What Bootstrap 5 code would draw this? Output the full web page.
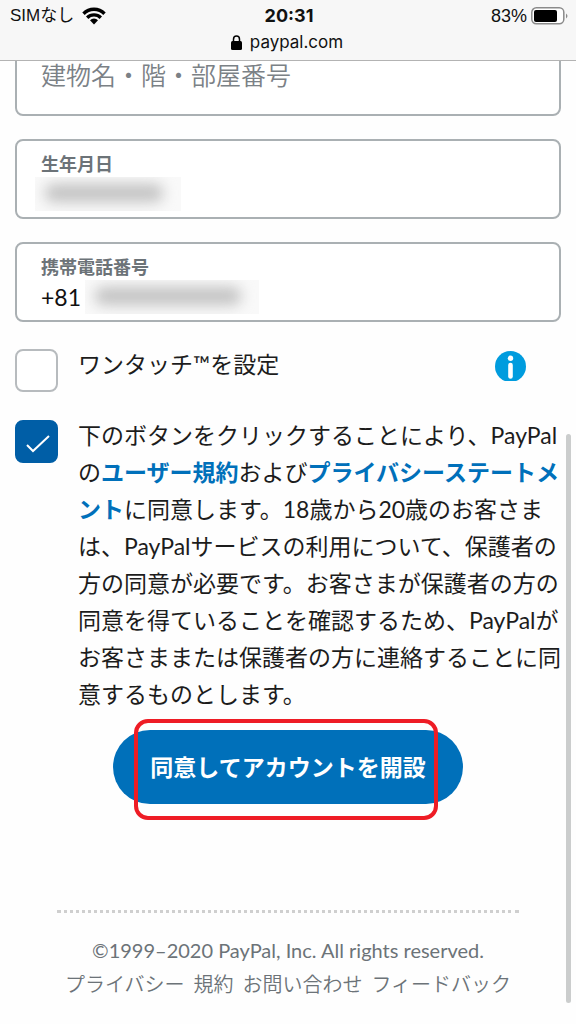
<!DOCTYPE html>
<html lang="ja">
<head>
<meta charset="utf-8">
<meta name="viewport" content="width=device-width, initial-scale=1">
<title>PayPal - アカウント開設</title>
<link href="https://cdn.jsdelivr.net/npm/bootstrap@5.3.0/dist/css/bootstrap.min.css" rel="stylesheet">
<style>
  body { font-family: Lato, "Noto Sans CJK JP", sans-serif; color: #1c1c1c; background: #fefefe; font-size: 23px; }
  .phone-bar { background: #f7f7f7; border-bottom: 1px solid #b3b3b3; font: 17px/26px Inter, "Noto Sans CJK JP", sans-serif; color: #111; padding: 3px 8px 5px 10px; }
  .phone-bar .sim { font-family: "Liberation Sans", "Noto Sans CJK JP", sans-serif; }
  .phone-bar .charge { font-size: 18px; }
  .phone-bar strong { font-size: 18px; }
  .phone-bar .side { flex: 1 1 0; }
  .signup { padding: 0 15px; margin-top: -25px; }
  .field { border: 2px solid #aab0b3; border-radius: 8px; height: 80px; margin-bottom: 23px; padding: 4px 24px 0; background: #fff; }
  .field label { color: #6c7378; font-size: 18px; line-height: 26px; font-weight: 700; }
  .field input { border: 0; padding: 0; background: none; outline: 0; width: 100%; }
  .field .address { font-size: 25px; color: #6c7378; }
  .field .address::placeholder { color: #7b8186; opacity: 1; font-weight: 350; }
  .masked { overflow: hidden; background: #f9f9f9; height: 34px; padding: 7px 18px 9px 10px; }
  .masked input { display: block; height: 18px; background: #c2c2c2; filter: blur(7px); border-radius: 8px; color: transparent; }
  .birth { width: 146px; margin-left: -6px; }
  .phone { width: 174px; }
  .prefix { font-size: 23px; line-height: 34px; color: #111; }
  .form-check-input.tick { width: 43px; height: 43px; border: 2px solid #b7bbbe; border-radius: 8px; margin: 0; }
  .form-check-input.tick:checked { background-color: #005ea6; border-color: #005ea6; background-size: 43px 43px;
    background-image: url("data:image/svg+xml,%3Csvg xmlns='http://www.w3.org/2000/svg' viewBox='0 0 43 43'%3E%3Cpath d='M12 25l6 6L34 16' fill='none' stroke='%23fff' stroke-width='2'/%3E%3C/svg%3E"); }
  .option { gap: 20px; }
  .option label { line-height: 37px; margin-top: -3px; }
  .info-btn { width: 31px; height: 30px; margin: 2px 35px 0 0; overflow: hidden; }
  .terms a { color: #0070ba; font-weight: 700; text-decoration: none; }
  .submit-area { margin-top: 17px; }
  .submit-btn { background: #0070ba; color: #fff; font-size: 23px; font-weight: 700; line-height: 34px; padding: 20px 37px; border: 0; }
  .submit-btn:hover { background: #005ea6; color: #fff; }
  .highlight { inset: -11px 25px -16px 21px; border: 4px solid #ee1c25; border-radius: 14px; pointer-events: none; }
  .site-foot { margin: 106px 57px 0; padding-top: 20px; color: #6c7378; font-size: 20px; line-height: 34px; border-top: 3px dotted #cfcfcf; }
  .site-foot a { color: #6c7378; text-decoration: none; }
  .site-foot nav { gap: 9px; font-weight: 350; }
  .scroll-thumb { width: 5px; right: 5px; top: 434px; bottom: 21px; border-radius: 3px; background: #cbcdcd; }
</style>
</head>
<body>
<header class="phone-bar sticky-top">
  <div class="d-flex align-items-center">
    <div class="side d-flex align-items-center gap-2">
      <span class="sim">SIMなし</span>
      <svg width="24" height="18" viewBox="0 0 24 18" aria-hidden="true"><g fill="none" stroke="#000" stroke-width="3.4"><path d="M1.500 6.700a14.600 14.600 0 0 1 21 0"/><path d="M5.200 10.700a9.600 9.600 0 0 1 13.600 0"/></g><path d="M8 13.300a5.600 5.600 0 0 1 8 0L12 17.500z"/></svg>
    </div>
    <strong class="fw-bold">20:31</strong>
    <div class="side d-flex align-items-center justify-content-end gap-1">
      <span class="sim charge">83%</span>
      <svg width="37" height="18" viewBox="0 0 37 18" aria-hidden="true"><rect x=".8" y=".8" width="32" height="16" rx="4.500" fill="#fff" stroke="#8b8b8b" stroke-width="1.500"/><rect x="3" y="3" width="23" height="12" rx="2"/><path d="M35 6.500q3 2.500 0 5z" fill="#8b8b8b"/></svg>
    </div>
  </div>
  <div class="d-flex align-items-center justify-content-center gap-2 pe-1">
    <svg width="11" height="15" viewBox="0 0 11 15" aria-hidden="true"><rect y="6" width="11" height="9" rx="1.500"/><path d="M2.500 7V4.200a3 3.200 0 0 1 6 0V7" fill="none" stroke="#000" stroke-width="1.500"/></svg>
    <span>paypal.com</span>
  </div>
</header>

<main class="signup">
  <form>
    <div class="field d-flex align-items-center pt-0">
      <input class="address" type="text" placeholder="建物名・階・部屋番号" aria-label="建物名・階・部屋番号">
    </div>
    <div class="field d-flex flex-column justify-content-center">
      <label for="birth">生年月日</label>
      <div class="masked birth"><input id="birth" type="text"></div>
    </div>
    <div class="field d-flex flex-column justify-content-center">
      <label for="phone">携帯電話番号</label>
      <div class="d-flex gap-1"><span class="prefix">+81</span><div class="masked phone"><input id="phone" type="tel"></div></div>
    </div>

    <div class="option d-flex align-items-start pt-1">
      <input class="form-check-input tick flex-shrink-0" type="checkbox" id="onetouch">
      <label class="flex-grow-1" for="onetouch">ワンタッチ™を設定</label>
      <button class="info-btn btn p-0 border-0 rounded-0 d-flex" type="button" aria-label="ワンタッチについて">
        <svg width="31" height="31" viewBox="0 0 31 31" class="flex-shrink-0" aria-hidden="true"><circle cx="15.500" cy="15.500" r="15.500" fill="#009cde"/><circle cx="15.500" cy="7.300" r="2.700" fill="#fff"/><path d="M15.500 14v11.500" stroke="#fff" stroke-width="4.600" stroke-linecap="round"/></svg>
      </button>
    </div>

    <div class="option terms d-flex align-items-start mt-4 pt-1">
      <input class="form-check-input tick flex-shrink-0" type="checkbox" id="agree" checked>
      <label for="agree">下のボタンをクリックすることにより、PayPalの<a href="#">ユーザー規約</a>および<a href="#">プライバシーステートメント</a>に同意します。18歳から20歳のお客さまは、PayPalサービスの利用について、保護者の方の同意が必要です。お客さまが保護者の方の同意を得ていることを確認するため、PayPalがお客さままたは保護者の方に連絡することに同意するものとします。</label>
    </div>

    <div class="submit-area text-center">
      <div class="position-relative d-inline-block align-top">
        <button class="submit-btn btn rounded-pill" type="submit">同意してアカウントを開設</button>
        <div class="highlight position-absolute"></div>
      </div>
    </div>
  </form>
</main>

<footer class="site-foot text-center">
  <p class="mb-0">©1999–2020 PayPal, Inc. All rights reserved.</p>
  <nav class="d-flex justify-content-center text-nowrap">
    <a href="#">プライバシー</a>
    <a href="#">規約</a>
    <a href="#">お問い合わせ</a>
    <a href="#">フィードバック</a>
  </nav>
</footer>
<div class="scroll-thumb position-fixed"></div>
<script src="https://cdn.jsdelivr.net/npm/bootstrap@5.3.0/dist/js/bootstrap.bundle.min.js"></script>
</body>
</html>
